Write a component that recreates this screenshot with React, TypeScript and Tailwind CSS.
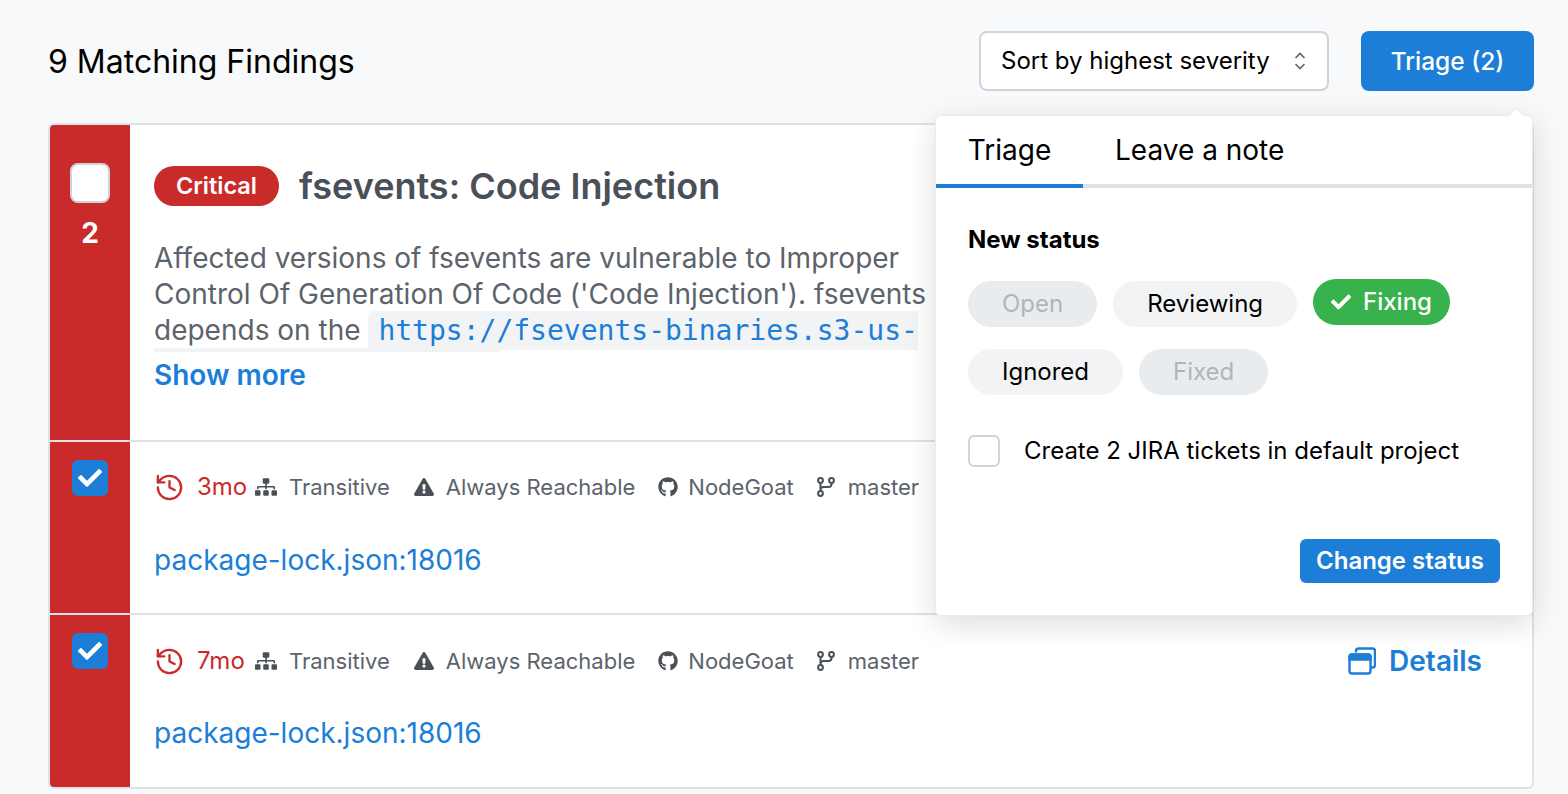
import { History } from "lucide-react";
import { FaCheck, FaExclamationTriangle, FaGithub, FaSitemap } from "react-icons/fa";

function Meta({ age }: { age: string }) {
  return (
    <div className="flex items-center h-[30px] text-[22px] text-[#5c636b] whitespace-nowrap">
      <History className="w-[31px] h-[31px] text-[#c92a2a] mr-[12px]" strokeWidth={1.8} />
      <span className="text-[24px] text-[#c92a2a] w-[58px]">{age}</span>
      <FaSitemap className="w-[22px] h-[22px] text-[#495057] mr-[12px]" />
      <span>Transitive</span>
      <FaExclamationTriangle className="w-[20px] h-[20px] text-[#495057] ml-[24px] mr-[12px]" />
      <span>Always Reachable</span>
      <FaGithub className="w-[20px] h-[20px] text-[#495057] ml-[23px] mr-[10px]" />
      <span>NodeGoat</span>
      <svg className="ml-[23px] mr-[13px]" width="18" height="20" viewBox="0 0 18 20" fill="none" stroke="#495057" strokeWidth="2">
        <circle cx="3.5" cy="3.5" r="2.4" />
        <circle cx="3.5" cy="16.5" r="2.4" />
        <circle cx="14.5" cy="3.5" r="2.4" />
        <path d="M3.5 6v8M14.5 6v1a3 3 0 0 1-3 3H6.5a3 3 0 0 0-3 3" />
      </svg>
      <span>master</span>
    </div>
  );
}

function Row({ age, height, metaTop, fileTop }: { age: string; height: string; metaTop: string; fileTop: string }) {
  return (
    <div className={`flex border-t-2 border-[#dee2e6] ${height}`}>
      <div className="w-[80px] shrink-0 bg-[#c92a2a] flex justify-center pt-[18px]">
        <div className="w-[36px] h-[36px] rounded-[6px] bg-[#1c7ed6] flex items-center justify-center">
          <FaCheck className="w-[24px] h-[24px] text-white" />
        </div>
      </div>
      <div className="flex-1 pl-[24px] pr-[50px]">
        <div className={`flex items-center justify-between ${metaTop}`}>
          <Meta age={age} />
          <div className="flex items-center gap-[13px] text-[#1c7ed6] text-[28px] font-semibold">
            <svg width="28" height="28" viewBox="0 0 28 28" fill="none" stroke="currentColor" strokeWidth="2.4">
              <path d="M8 5.5V4a2.5 2.5 0 0 1 2.5-2.5h14A2.5 2.5 0 0 1 27 4v14a2.5 2.5 0 0 1-2.5 2.5H23" />
              <rect x="1.5" y="7.5" width="21" height="19" rx="2.5" />
              <path d="M1.5 12.5h21V10a2.5 2.5 0 0 0-2.5-2.5H4A2.5 2.5 0 0 0 1.5 10z" fill="currentColor" />
            </svg>
            <span>Details</span>
          </div>
        </div>
        <div className={`${fileTop} text-[28px] leading-[36px] text-[#1c7ed6]`}>package-lock.json:18016</div>
      </div>
    </div>
  );
}

function Pill({ label, kind }: { label: string; kind: "disabled" | "plain" }) {
  return (
    <div
      className={`h-[46px] px-[34px] rounded-full flex items-center text-[24px] ${
        kind === "disabled" ? "bg-[#e9ecef] text-[#adb5bd]" : "bg-[#f1f3f5] text-black"
      }`}
    >
      {label}
    </div>
  );
}

export default function App() {
  return (
    <div className="relative h-[794px] overflow-hidden bg-[#f8f9fb] pl-[48px] pr-[34px] text-black font-['Inter',sans-serif]">
      <header className="h-[123px] pb-[1px] flex items-center">
        <h1 className="mt-[2px] text-[32px] font-normal">9 Matching Findings</h1>
        <div className="ml-auto w-[350px] h-[60px] rounded-[8px] border-2 border-[#ced4da] bg-white flex items-center justify-between pl-[20px] pr-[20px] text-[24px]">
          <span>Sort by highest severity</span>
          <svg width="14" height="20" viewBox="0 0 14 20" fill="none" stroke="#5c636b" strokeWidth="1.6">
            <path d="M2.5 7 7 2.5 11.5 7M2.5 13 7 17.5 11.5 13" />
          </svg>
        </div>
        <button className="ml-[32px] w-[173px] h-[60px] rounded-[8px] bg-[#1c7ed6] text-white text-[24.5px] font-medium">Triage (2)</button>
      </header>

      <section className="h-[666px] rounded-[6px] border-2 border-[#dee2e6] bg-white overflow-hidden">
        <div className="flex h-[315px]">
          <div className="w-[80px] shrink-0 bg-[#c92a2a] flex flex-col items-center pt-[38px]">
            <div className="w-[40px] h-[40px] rounded-[8px] bg-white border-2 border-[#ced4da]" />
            <div className="mt-[12px] text-[28px] leading-[36px] font-bold text-white">2</div>
          </div>
          <div className="flex-1 pl-[24px] pt-[34px]">
            <div className="flex items-center">
              <span className="h-[40px] w-[125px] rounded-full bg-[#c92a2a] text-white text-[23.5px] font-semibold flex items-center justify-center">Critical</span>
              <h2 className="ml-[20px] text-[36px] font-semibold text-[#495057]">fsevents: Code Injection</h2>
            </div>
            <p className="mt-[27px] w-[790px] h-[112px] overflow-hidden text-[28px] leading-[36px] text-[#5c636b]">
              Affected versions of fsevents are vulnerable to Improper Control Of Generation Of Code ('Code Injection'). fsevents depends on the{" "}
              <code className="font-['DejaVu_Sans_Mono',monospace] text-[28px] text-[#1c7ed6] bg-[#f1f3f5] rounded-[6px] px-[10px] py-[3px]">https://fsevents-binaries.s3-us-west-2.amazonaws.com</code>
            </p>
            <div className="text-[28px] leading-[36px] font-semibold text-[#1c7ed6] mt-[5px]">Show more</div>
          </div>
        </div>
        <Row age="3mo" height="h-[173px]" metaTop="pt-[24px]" fileTop="mt-[34px]" />
        <Row age="7mo" height="h-[174px]" metaTop="pt-[25px]" fileTop="mt-[33px]" />
      </section>

      <aside className="absolute left-[935px] top-[115px] w-[598px] h-[501px] rounded-[6px] border border-[#e9ecef] bg-white shadow-[0_8px_30px_rgba(0,0,0,0.14)] flex flex-col">
        <div className="absolute right-[10px] -top-[6px] w-[11px] h-[11px] rotate-45 bg-white border-l border-t border-[#e9ecef]" />
        <div className="flex h-[72px] border-b-4 border-[#dee2e6] text-[28px]">
          <div className="w-[147px] -mb-[4px] border-b-4 border-[#1c7ed6] flex items-center justify-center">Triage</div>
          <div className="pl-[32px] flex items-center">Leave a note</div>
        </div>
        <div className="flex-1 flex flex-col px-[32px]">
          <div className="mt-[36px] text-[24px] leading-[32px] font-bold">New status</div>
          <div className="mt-[25px] flex flex-wrap items-start gap-x-[16px]">
            <Pill label="Open" kind="disabled" />
            <Pill label="Reviewing" kind="plain" />
            <div className="-mt-[2px] h-[46px] pl-[18px] pr-[18px] rounded-full bg-[#37b24d] text-white text-[24px] font-medium flex items-center gap-[12px]">
              <FaCheck className="w-[20px] h-[20px]" />
              Fixing
            </div>
          </div>
          <div className="mt-[22px] flex gap-x-[16px]">
            <Pill label="Ignored" kind="plain" />
            <Pill label="Fixed" kind="disabled" />
          </div>
          <div className="mt-[38px] flex items-center gap-[24px] text-[24px]">
            <div className="w-[32px] h-[32px] rounded-[6px] border-2 border-[#ced4da] bg-white" />
            <span>Create 2 JIRA tickets in default project</span>
          </div>
          <button className="mt-[70px] self-end w-[200px] h-[44px] rounded-[6px] bg-[#1c7ed6] text-white text-[24px] font-semibold">Change status</button>
        </div>
      </aside>
    </div>
  );
}
